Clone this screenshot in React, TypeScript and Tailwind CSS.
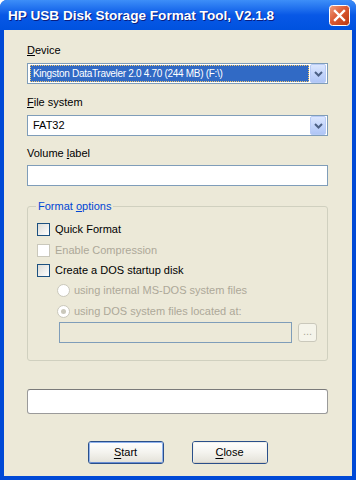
import React from "react";

const font = "font-['Tahoma','Liberation_Sans',sans-serif]";

function DropArrow() {
  return (
    <span className="flex h-[19px] w-[16px] items-center justify-center rounded-[2px] border border-[#b8cbf6] bg-gradient-to-b from-[#dce7fe] via-[#c4d5fb] to-[#b0c6f6]">
      <svg width="9" height="6" viewBox="0 0 9 6">
        <path d="M1 1 L4.5 4.5 L8 1" fill="none" stroke="#4d6185" strokeWidth="2" />
      </svg>
    </span>
  );
}

function CloseGlyph() {
  return (
    <svg width="21" height="21" viewBox="0 0 21 21">
      <defs>
        <linearGradient id="xpclose" x1="0" y1="0" x2="1" y2="1">
          <stop offset="0" stopColor="#f0a083" />
          <stop offset="0.45" stopColor="#dc5b34" />
          <stop offset="1" stopColor="#b9360f" />
        </linearGradient>
      </defs>
      <rect x="0.5" y="0.5" width="20" height="20" rx="3" fill="url(#xpclose)" stroke="#ffffff" />
      <path d="M6 6 L15 15 M15 6 L6 15" stroke="#ffffff" strokeWidth="2.4" strokeLinecap="square" />
    </svg>
  );
}

function Combo({ value, selected }: { value: string; selected?: boolean }) {
  return (
    <div className="flex h-[21px] items-center border border-[#7f9db9] bg-white pl-[1px] pr-[1px]">
      <div className="flex h-[19px] flex-1 items-center p-[1px]">
        {selected ? (
          <span className="flex h-full w-full items-center border border-dotted border-[#f4c86a] bg-[#316ac5] pl-[2px] text-[10px] tracking-[-0.3px] text-white">
            {value}
          </span>
        ) : (
          <span className="pl-[3px] text-black">{value}</span>
        )}
      </div>
      <DropArrow />
    </div>
  );
}

function CheckBox({ label, disabled }: { label: string; disabled?: boolean }) {
  return (
    <div className="flex h-[20px] items-center">
      <span
        className={
          disabled
            ? "h-[13px] w-[13px] border border-[#cac8bb] bg-white"
            : "h-[13px] w-[13px] border border-[#1c5180] bg-gradient-to-br from-[#dcdcd7] to-white"
        }
      />
      <span className={disabled ? "ml-[5px] text-[#aca899]" : "ml-[5px] text-black"}>{label}</span>
    </div>
  );
}

function Radio({ label, checked }: { label: string; checked?: boolean }) {
  return (
    <div className="flex h-[20px] items-center pl-[20px]">
      <span className="flex h-[13px] w-[13px] items-center justify-center rounded-full border border-[#cac8bb] bg-white">
        {checked && <span className="h-[5px] w-[5px] rounded-full bg-[#cac8bb]" />}
      </span>
      <span className="ml-[4px] text-[#aca899]">{label}</span>
    </div>
  );
}

function XpButton({ hot, rest, focused }: { hot: string; rest: string; focused?: boolean }) {
  return (
    <button
      type="button"
      className="flex h-[23px] w-[76px] items-center justify-center rounded-[3px] border border-[#2a4f8a] bg-gradient-to-b from-white via-[#f4f3ee] to-[#e3e1d8] text-black"
    >
      <span
        className={
          focused
            ? "flex h-full w-full items-center justify-center rounded-[2px] border border-[#8fb2ec] border-b-[#6a8fd4]"
            : "flex h-full w-full items-center justify-center rounded-[2px] border border-[#f0f0ea] border-b-[#d6d0c5]"
        }
      >
        <span className="underline underline-offset-2">{hot}</span>
        {rest}
      </span>
    </button>
  );
}

export default function App() {
  return (
    <div className={`${font} h-[480px] w-[356px] text-[11px] leading-[13px]`}>
      <div className="flex h-[480px] w-[356px] flex-col overflow-hidden rounded-t-[7px] bg-[#0049d6]">
        {/* Title bar */}
        <div className="flex h-[30px] shrink-0 items-center justify-between bg-gradient-to-b from-[#3d8ef8] via-[#0858e6] to-[#0052df] pl-[8px] pr-[6px]">
          <span className="font-['Trebuchet_MS','Liberation_Sans',sans-serif] text-[13.6px] font-bold text-white [text-shadow:1px_1px_0_#0a1e80]">
            HP USB Disk Storage Format Tool, V2.1.8
          </span>
          <CloseGlyph />
        </div>

        {/* Client area */}
        <div className="mx-[4px] mb-[4px] flex flex-1 flex-col bg-[#ece9d8] pl-[23px] pr-[24px] pt-[14px]">
          <div className="text-black">
            <span className="underline underline-offset-1">D</span>evice
          </div>
          <div className="mt-[6px]">
            <Combo value="Kingston DataTraveler 2.0 4.70 (244 MB) (F:\)" selected />
          </div>

          <div className="mt-[12px] text-black">
            <span className="underline underline-offset-1">F</span>ile system
          </div>
          <div className="mt-[6px]">
            <Combo value="FAT32" />
          </div>

          <div className="mt-[11px] text-black">
            Volume <span className="underline underline-offset-1">l</span>abel
          </div>
          <div className="mt-[5px] h-[21px] border border-[#7f9db9] bg-white" />

          {/* Format options group */}
          <div className="relative mt-[20px] h-[155px] rounded-[3px] border border-[#d0d0bf] pl-[9px] pr-[10px] pt-[12px]">
            <span className="absolute -top-[7px] left-[8px] bg-[#ece9d8] px-[2px] text-[#0046d5]">
              Format <span className="underline underline-offset-1">o</span>ptions
            </span>
            <CheckBox label="Quick Format" />
            <div className="mt-[1px]">
              <CheckBox label="Enable Compression" disabled />
            </div>
            <CheckBox label="Create a DOS startup disk" />
            <Radio label="using internal MS-DOS system files" />
            <div className="mt-[1px]">
              <Radio label="using DOS system files located at:" checked />
            </div>
            <div className="mt-[1px] flex items-center pl-[22px]">
              <div className="h-[21px] w-[233px] border border-[#7f9db9] bg-[#ece9d8]" />
              <span className="ml-[6px] flex h-[19px] w-[19px] items-center justify-center rounded-[3px] border border-[#cac8bb] bg-[#f5f4ea] pb-[3px] text-[#aca899]">
                ...
              </span>
            </div>
          </div>

          {/* Status box */}
          <div className="mt-[28px] h-[25px] rounded-[3px] border border-[#9a9a9a] border-t-[#7a7a7a] bg-white" />

          {/* Buttons */}
          <div className="mt-[27px] flex justify-center gap-[28px]">
            <XpButton hot="S" rest="tart" focused />
            <XpButton hot="C" rest="lose" />
          </div>
        </div>
      </div>
    </div>
  );
}
